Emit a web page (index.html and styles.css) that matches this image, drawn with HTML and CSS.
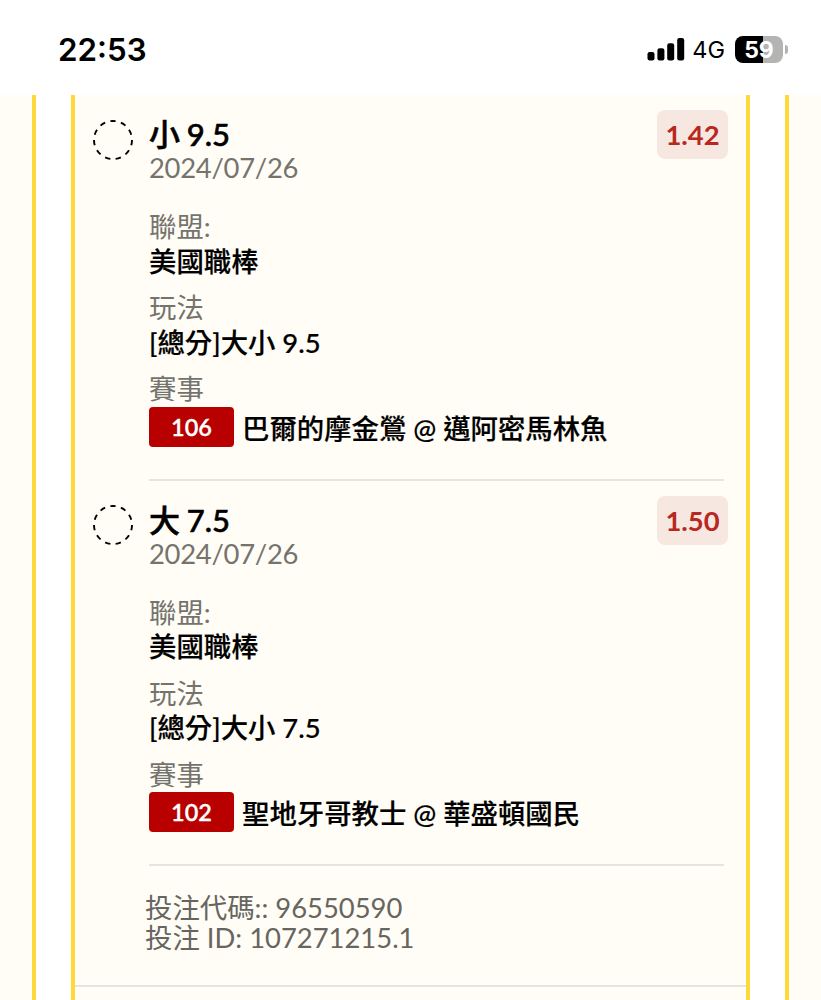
FILE: index.html
```html
<!DOCTYPE html>
<html lang="zh-Hant">
<head>
    <meta charset="UTF-8">
    <title>投注記錄</title>
    <link rel="stylesheet" href="styles.css">
</head>
<body>
    <header class="status-bar">
        <div class="time">22:53</div>
        <div class="status-icons">
            <svg class="signal" width="38" height="24" viewBox="0 0 38 24">
                <rect x="0.5" y="15" width="7" height="8.5" rx="2.2"/>
                <rect x="10.4" y="11.3" width="7" height="12.2" rx="2.2"/>
                <rect x="20.2" y="6.3" width="7" height="17.2" rx="2.2"/>
                <rect x="30.2" y="1" width="7" height="22.5" rx="2.2"/>
            </svg>
            <span class="network">4G</span>
            <div class="battery">59</div>
            <div class="battery-cap"></div>
        </div>
    </header>

    <main class="panel">
        <div class="ticket">
            <section class="leg">
                <svg class="pending" width="40" height="40" viewBox="0 0 40 40">
                    <circle cx="20" cy="20" r="19" pathLength="132"/>
                </svg>
                <div class="leg-body">
                    <h2>小 9.5</h2>
                    <div class="date">2024/07/26</div>
                    <div class="field">
                        <div class="label">聯盟:</div>
                        <div class="value">美國職棒</div>
                    </div>
                    <div class="field">
                        <div class="label">玩法</div>
                        <div class="value">[總分]大小 9.5</div>
                    </div>
                    <div class="field">
                        <div class="label">賽事</div>
                        <div class="match"><span class="code">106</span><span class="teams">巴爾的摩金鶯 @ 邁阿密馬林魚</span></div>
                    </div>
                </div>
                <div class="odds">1.42</div>
            </section>

            <section class="leg">
                <svg class="pending" width="40" height="40" viewBox="0 0 40 40">
                    <circle cx="20" cy="20" r="19" pathLength="132"/>
                </svg>
                <div class="leg-body">
                    <h2>大 7.5</h2>
                    <div class="date">2024/07/26</div>
                    <div class="field">
                        <div class="label">聯盟:</div>
                        <div class="value">美國職棒</div>
                    </div>
                    <div class="field">
                        <div class="label">玩法</div>
                        <div class="value">[總分]大小 7.5</div>
                    </div>
                    <div class="field">
                        <div class="label">賽事</div>
                        <div class="match"><span class="code">102</span><span class="teams">聖地牙哥教士 @ 華盛頓國民</span></div>
                    </div>
                </div>
                <div class="odds">1.50</div>
            </section>

            <footer class="bet-info">
                <div>投注代碼:: 96550590</div>
                <div>投注 ID: 107271215.1</div>
            </footer>
        </div>
    </main>
</body>
</html>
```
FILE: styles.css
```css
* {
    box-sizing: border-box;
}

body {
    display: flex;
    flex-direction: column;
    height: 1000px;
    margin: 0;
    overflow: hidden;
    background-color: #fffdf5;
    color: #000;
    font-family: Lato, "Noto Sans CJK TC", sans-serif;
    font-size: 27.4px;
}

/* Status bar */
.status-bar {
    display: flex;
    flex: none;
    justify-content: space-between;
    height: 95px;
    padding: 33px 33px 0 58px;
    background-color: #fff;
    font-family: Inter, sans-serif;
}

.time {
    padding-top: 1px;
    font-size: 31.3px;
    font-weight: 600;
    line-height: 33px;
}

.status-icons {
    display: flex;
    align-items: center;
    height: 32px;
}

.network {
    margin-left: 7px;
    padding-top: 2px;
    font-size: 23.5px;
    line-height: 32px;
}

.battery {
    width: 48px;
    height: 27px;
    margin-left: 10px;
    border-radius: 8px;
    background: linear-gradient(to right, #000 58%, #b4b4b4 58%);
    color: #fff;
    font-size: 23px;
    font-weight: 700;
    line-height: 28px;
    text-align: center;
}

.battery-cap {
    width: 3px;
    height: 9px;
    margin-left: 2px;
    border-radius: 0 4px 4px 0;
    background-color: #b4b4b4;
}

/* Ticket */
.panel {
    flex: 1;
    width: 757px;
    margin-left: 32px;
    padding: 0 35px;
    border: solid #ffd93b;
    border-width: 0 4px;
    background-color: #fff;
}

.ticket {
    height: 100%;
    border: solid #ffd93b;
    border-width: 0 4px;
    background-color: #fffdf5;
}

.leg {
    display: grid;
    grid-template-columns: 40px 1fr 71px;
    column-gap: 16px;
    height: 385.5px;
    padding: 15px 18px 0;
}

.pending {
    margin-top: 9.5px;
}

.pending circle {
    fill: none;
    stroke: #000;
    stroke-width: 1.9;
    stroke-dasharray: 6 6;
    stroke-dashoffset: 3;
    transform: rotate(-90deg);
    transform-origin: center;
}

.leg-body {
    height: 370.5px;
    margin-right: -83px;
    padding-top: 7px;
    border-bottom: 2px solid #e6e4de;
}

/* a thin stroke thickens the medium weight a little */
h2,
.value,
.teams {
    font-weight: 500;
    -webkit-text-stroke: 0.2px #000;
}

h2 {
    margin: 0;
    font-size: 31px;
    line-height: 34px;
    word-spacing: -1px;
    -webkit-text-stroke-width: 0.6px;
}

.date {
    margin-bottom: 26px;
    color: #74736e;
    letter-spacing: -0.27px;
    line-height: 33px;
}

.field {
    margin-bottom: 13.5px;
}

.label {
    color: #74736e;
    line-height: 34.5px;
}

.value {
    line-height: 33px;
}

.match {
    display: flex;
    align-items: center;
    gap: 8px;
    height: 40px;
    white-space: nowrap;
}

.code {
    width: 85px;
    height: 40px;
    border-radius: 4px;
    background-color: #b80000;
    color: #fff;
    font-size: 23.5px;
    font-weight: 600;
    line-height: 40px;
    text-align: center;
    -webkit-text-stroke: 0.3px #fff;
}

.odds {
    height: 49px;
    border-radius: 8px;
    background-color: #f7e7e1;
    color: #b8281f;
    font-weight: 700;
    line-height: 50px;
    text-align: center;
}

.bet-info {
    height: 121px;
    padding: 27px 0 0 70px;
    border-bottom: 2px solid #e6e4de;
    color: #66655f;
    line-height: 30px;
}
```
